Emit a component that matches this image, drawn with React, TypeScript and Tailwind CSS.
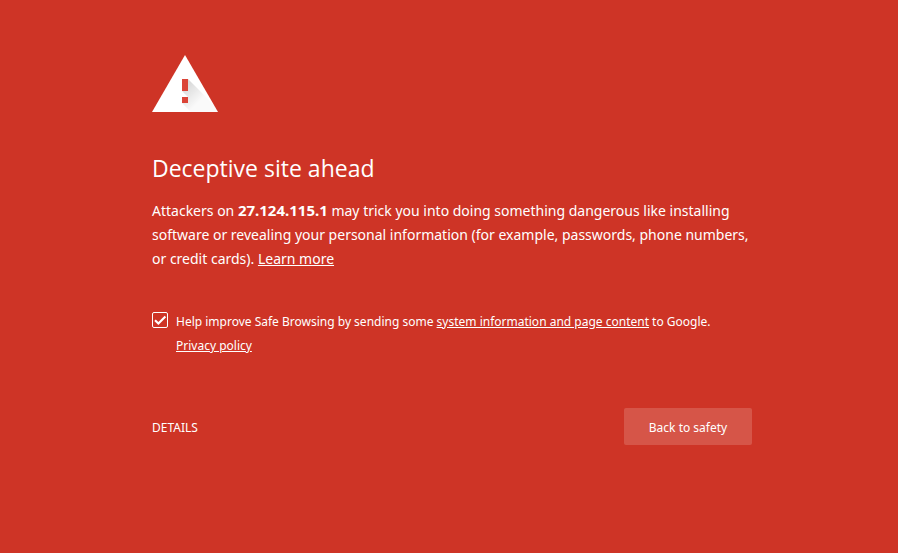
import { useState } from "react";

function WarningIcon() {
  return (
    <svg viewBox="0 0 66 57" className="block h-[57px] w-[66px]" role="img" aria-label="Warning">
      <defs>
        <linearGradient id="shade" gradientUnits="userSpaceOnUse" x1="31" y1="33" x2="46" y2="48">
          <stop offset="0" stopColor="#000" stopOpacity="0.15" />
          <stop offset="1" stopColor="#000" stopOpacity="0.02" />
        </linearGradient>
        <clipPath id="triangle">
          <path d="M33 0L66 57H0Z" />
        </clipPath>
      </defs>
      <path d="M33 0L66 57H0Z" fill="#fff" />
      <g clipPath="url(#triangle)">
        <path d="M36 24L70 58H40L30 48V42L36 42L30 36Z" fill="url(#shade)" />
      </g>
      <path d="M30 24h6v12h-6zM30 42h6v6h-6z" fill="#db4437" />
    </svg>
  );
}

export default function App() {
  const [reporting, setReporting] = useState(true);

  return (
    <div className="min-h-screen bg-[#ce3426] pl-1.5 font-['Noto_Sans','Open_Sans',sans-serif] text-white">
      <main className="mx-auto max-w-[600px] pt-[55px]">
        <WarningIcon />
        <h1 className="mt-10 font-['Open_Sans','Noto_Sans',sans-serif] text-[23px] leading-8">
          Deceptive site ahead
        </h1>
        <p className="mt-[14px] text-sm leading-6">
          Attackers on <strong className="text-[15px] font-bold">27.124.115.1</strong> may trick you into doing
          something dangerous like installing software or revealing your personal information (for example,
          passwords, phone numbers, or credit cards).{" "}
          <a href="#learn-more" className="underline">
            Learn more
          </a>
        </p>
        <div className="mt-[39px] flex gap-2 text-xs leading-6">
          <span className="relative mt-0.5 size-4 shrink-0">
            <input
              id="reporting"
              type="checkbox"
              checked={reporting}
              onChange={(event) => setReporting(event.target.checked)}
              className="block size-4 appearance-none rounded-xs border border-white"
            />
            {reporting && (
              <svg viewBox="0 0 16 16" className="pointer-events-none absolute inset-0 size-4" aria-hidden="true">
                <path d="M3 8.2L6.4 11.6L13.4 4.4" fill="none" stroke="#fff" strokeWidth="2.1" />
              </svg>
            )}
          </span>
          <label htmlFor="reporting">
            Help improve Safe Browsing by sending some{" "}
            <a href="#system-information" className="underline">
              system information and page content
            </a>{" "}
            to Google.{" "}
            <a href="#privacy" className="whitespace-nowrap underline">
              Privacy policy
            </a>
          </label>
        </div>
        <div className="mt-[50px] flex items-center justify-between text-xs">
          <button type="button" className="h-[37px] pt-0.5">
            DETAILS
          </button>
          <button type="button" className="h-[37px] w-32 rounded-xs bg-[#d65548] pt-0.5">
            Back to safety
          </button>
        </div>
      </main>
    </div>
  );
}
